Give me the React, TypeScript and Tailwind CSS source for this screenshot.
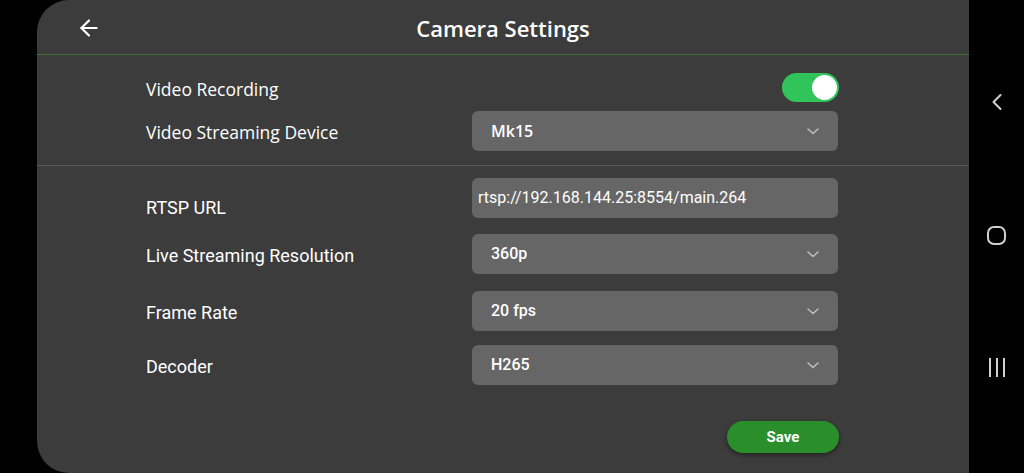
import { ArrowLeft, ChevronLeft } from 'lucide-react';

// 카메라 설정 화면 (안드로이드 가로 모드)

const nunito = { fontFamily: '"Open Sans", Lato, sans-serif' };

const Chevron = () => (
  <svg width="14" height="10" viewBox="0 0 14 10" fill="none" className="shrink-0">
    <path d="M2 3l5 4.5L12 3" stroke="#bdbdbd" strokeWidth="1.6" strokeLinecap="round" strokeLinejoin="round" />
  </svg>
);

interface RowProps {
  label: string;
  value: string;
}

const SelectRow = ({ label, value }: RowProps) => (
  <div className="flex items-center h-10">
    <div className="w-[326px] text-[18px] text-white pt-[3px]">{label}</div>
    <div className="w-[366px] h-10 rounded-md bg-[#666666] flex items-center justify-between pl-[19px] pr-[18px]">
      <span className="text-[16px] font-medium text-white">{value}</span>
      <Chevron />
    </div>
  </div>
);

export default function App() {
  return (
    <div className="w-[1024px] h-[473px] bg-black flex overflow-hidden font-['Roboto',sans-serif]">
      <div className="w-[37px] shrink-0" />
      {/* main panel */}
      <div className="w-[932px] h-full bg-[#3c3c3c] rounded-l-[32px] flex flex-col">
        {/* header */}
        <div className="h-[55px] flex items-center relative border-b border-[#3f6e36] shrink-0">
          <ArrowLeft className="absolute left-[39px] top-[15px] w-[26px] h-[26px] text-white" strokeWidth={2} />
          <div className="flex-1 text-center text-white text-[22px] font-semibold pt-[2px]" style={nunito}>
            Camera Settings
          </div>
        </div>

        {/* top group */}
        <div className="flex flex-col pl-[109px] pt-[18px] pb-[14px] border-b border-[#5a5a5a]">
          <div className="flex items-center h-7">
            <div className="flex-1 text-[17.5px] font-medium text-white pt-[5px]" style={nunito}>Video Recording</div>
            <div className="w-[57px] h-[29px] rounded-full bg-[#30c45a] flex items-center justify-end pr-[2px] mr-[130px]">
              <div className="w-[25px] h-[25px] rounded-full bg-white" />
            </div>
          </div>
          <div className="mt-[10px]">
            <div className="flex items-center h-10">
              <div className="w-[326px] text-[17.5px] font-medium text-white pt-[2px]" style={nunito}>Video Streaming Device</div>
              <div className="w-[366px] h-10 rounded-md bg-[#666666] flex items-center justify-between pl-[19px] pr-[18px]">
                <span className="text-[16px] font-semibold text-white" style={nunito}>Mk15</span>
                <Chevron />
              </div>
            </div>
          </div>
        </div>

        {/* stream group */}
        <div className="flex flex-col pl-[109px] pt-[12px]">
          <div className="flex items-center h-10">
            <div className="w-[326px] text-[18px] text-white pt-[18px]">RTSP URL</div>
            <div className="w-[366px] h-10 rounded-md bg-[#666666] flex items-center pl-[6px]">
              <span className="text-[16px] text-white">rtsp://192.168.144.25:8554/main.264</span>
            </div>
          </div>
          <div className="mt-[16px]">
            <SelectRow label="Live Streaming Resolution" value="360p" />
          </div>
          <div className="mt-[17px]">
            <SelectRow label="Frame Rate" value="20 fps" />
          </div>
          <div className="mt-[14px]">
            <SelectRow label="Decoder" value="H265" />
          </div>
          <div className="flex justify-end mr-[130px] mt-[36px]">
            <button className="w-[112px] h-[32px] rounded-full bg-[#2a8e2a] text-white text-[15px] font-bold shadow-[0_2px_4px_rgba(0,0,0,0.45)]">
              Save
            </button>
          </div>
        </div>
      </div>

      {/* android nav bar */}
      <div className="flex-1 flex flex-col items-center text-[#d0d0d0]">
        <div className="mt-[88px]">
          <ChevronLeft className="w-[28px] h-[28px]" strokeWidth={1.8} />
        </div>
        <div className="mt-[110px] w-[19px] h-[19px] rounded-[7px] border-2 border-[#d0d0d0]" />
        <div className="mt-[113px] flex gap-[5px]">
          <div className="w-[2px] h-[19px] bg-[#d0d0d0]" />
          <div className="w-[2px] h-[19px] bg-[#d0d0d0]" />
          <div className="w-[2px] h-[19px] bg-[#d0d0d0]" />
        </div>
      </div>
    </div>
  );
}
